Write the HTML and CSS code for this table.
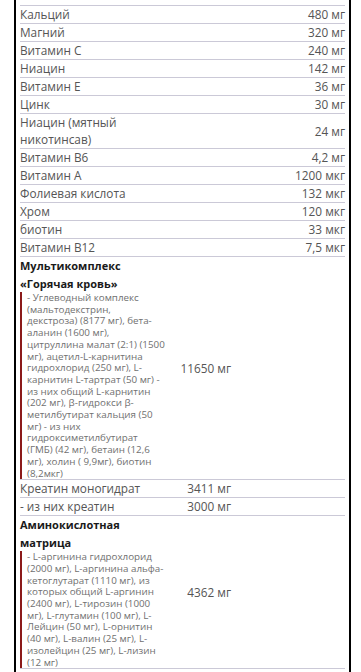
FILE: index.html
```html
<!DOCTYPE html>
<html lang="ru">
<head>
    <meta charset="UTF-8">
    <meta name="viewport" content="width=device-width, initial-scale=1.0">
    <title>Состав</title>
    <link rel="stylesheet" href="styles.css">
</head>
<body>
    <div class="box">
        <div class="facts">
            <div class="row"><span class="name">Кальций</span><span class="value">480 мг</span></div>
            <div class="row"><span class="name">Магний</span><span class="value">320 мг</span></div>
            <div class="row"><span class="name">Витамин С</span><span class="value">240 мг</span></div>
            <div class="row"><span class="name">Ниацин</span><span class="value">142 мг</span></div>
            <div class="row"><span class="name">Витамин Е</span><span class="value">36 мг</span></div>
            <div class="row"><span class="name">Цинк</span><span class="value">30 мг</span></div>
            <div class="row"><span class="name">Ниацин (мятный<br>никотинсав)</span><span class="value">24 мг</span></div>
            <div class="row"><span class="name">Витамин В6</span><span class="value">4,2 мг</span></div>
            <div class="row"><span class="name">Витамин А</span><span class="value">1200 мкг</span></div>
            <div class="row"><span class="name">Фолиевая кислота</span><span class="value">132 мкг</span></div>
            <div class="row"><span class="name">Хром</span><span class="value">120 мкг</span></div>
            <div class="row"><span class="name">биотин</span><span class="value">33 мкг</span></div>
            <div class="row"><span class="name">Витамин В12</span><span class="value">7,5 мкг</span></div>
        </div>

        <div class="mix">
            <div class="mix-row">
                <div class="mix-name">
                    <h4 class="mix-title">Мультикомплекс<br>«Горячая кровь»</h4>
                    <p class="mix-list">
                        - Углеводный комплекс<br>
                        (мальтодекстрин,<br>
                        декстроза) (8177 мг), бета-<br>
                        аланин (1600 мг),<br>
                        цитруллина малат (2:1) (1500<br>
                        мг), ацетил-L-карнитина<br>
                        гидрохлорид (250 мг), L-<br>
                        карнитин L-тартрат (50 мг) -<br>
                        из них общий L-карнитин<br>
                        (202 мг), β-гидрокси β-<br>
                        метилбутират кальция (50<br>
                        мг) - из них<br>
                        гидроксиметилбутират<br>
                        (ГМБ) (42 мг), бетаин (12,6<br>
                        мг), холин ( 9,9мг), биотин<br>
                        (8,2мкг)
                    </p>
                </div>
                <div class="mix-value">11650 мг</div>
            </div>
            <div class="mix-row">
                <div class="mix-name plain">Креатин моногидрат</div>
                <div class="mix-value">3411 мг</div>
            </div>
            <div class="mix-row">
                <div class="mix-name plain">- из них креатин</div>
                <div class="mix-value">3000 мг</div>
            </div>
            <div class="mix-row">
                <div class="mix-name">
                    <h4 class="mix-title">Аминокислотная<br>матрица</h4>
                    <p class="mix-list">
                        - L-аргинина гидрохлорид<br>
                        (2000 мг), L-аргинина альфа-<br>
                        кетоглутарат (1110 мг), из<br>
                        которых общий L-аргинин<br>
                        (2400 мг), L-тирозин (1000<br>
                        мг), L-глутамин (100 мг), L-<br>
                        Лейцин (50 мг), L-орнитин<br>
                        (40 мг), L-валин (25 мг), L-<br>
                        изолейцин (25 мг), L-лизин<br>
                        (12 мг)
                    </p>
                </div>
                <div class="mix-value">4362 мг</div>
            </div>
        </div>
    </div>
</body>
</html>
```

FILE: styles.css
```css
body {
    margin: 0;
    font-family: "Open Sans", "Liberation Sans", sans-serif;
    background-color: #ffffff;
    color: #555555;
}

.box {
    width: 337px;
    box-sizing: border-box;
    margin-left: 14px;
    padding: 5px 4px 0 4px;
    border-left: 2px solid #000000;
    border-right: 2px solid #000000;
    min-height: 672px;
}

.row {
    display: flex;
    justify-content: space-between;
    align-items: center;
    border-top: 1px solid #cbc9d7;
    font-size: 11.8px;
    line-height: 17px;
}

.row:last-child { border-bottom: 1px solid #cbc9d7; }

.name { width: 150px; }

.value { text-align: right; }

.mix-row {
    display: grid;
    grid-template-columns: 140px 71px;
    align-items: center;
    border-bottom: 1px solid #cbc9d7;
}

.mix-value {
    text-align: right;
    font-size: 11.8px;
    line-height: 17px;
}

.plain {
    font-size: 11.8px;
    line-height: 17px;
}

.mix-title {
    margin: 0;
    font-size: 11px;
    line-height: 17.5px;
    font-weight: 700;
    color: #1a1a1a;
}

.mix-list {
    margin: 0;
    padding-left: 5px;
    border-left: 2px solid #8b1a1a;
    font-size: 9.8px;
    line-height: 11.7px;
    color: #707070;
    white-space: nowrap;
}
```
